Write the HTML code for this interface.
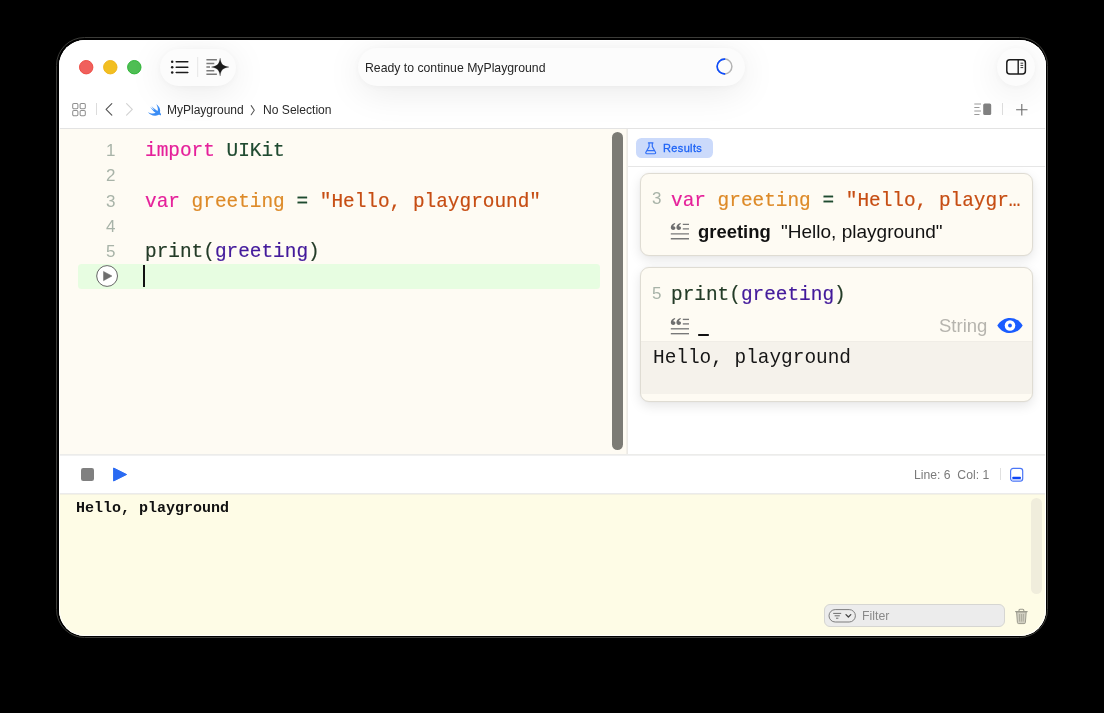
<!DOCTYPE html>
<html>
<head>
<meta charset="utf-8">
<title>MyPlayground</title>
<style>
html,body{margin:0;padding:0;background:#000;}
body{width:1104px;height:713px;position:relative;overflow:hidden;font-family:"Liberation Sans",sans-serif;}
.abs{position:absolute;}
.t{position:absolute;white-space:pre;line-height:1;will-change:transform;}
.mono{font-family:"Liberation Mono",monospace;}
#win{position:absolute;left:58.7px;top:39.5px;width:986.9px;height:596px;border-radius:26px;background:#fff;overflow:hidden;}
#ring{position:absolute;left:56px;top:36.9px;width:990px;height:599.1px;border-radius:28.5px;border:1px solid #3b3b38;}
/* everything inside #win positioned relative to page via negative offset wrapper */
#pg{position:absolute;left:-58.7px;top:-39.5px;width:1104px;height:713px;}
.pill{position:absolute;background:#fcfcfc;box-shadow:0 6px 36px rgba(0,0,0,.085),0 1px 6px rgba(0,0,0,.03);}
.code{font-family:"Liberation Mono",monospace;font-size:19.42px;-webkit-text-stroke:0.18px currentColor;}
.kw{color:#e5209a;}
.ty{color:#1f4a30;}
.id{color:#dd8a28;}
.st{color:#c64d13;}
.pl{color:#233b27;}
.us{color:#431a9b;}
.ln{color:#a8b3a8;font-size:17px;}
.card{position:absolute;background:#fefbf3;border:1px solid #dfdcd3;border-radius:9px;box-shadow:0 4px 12px rgba(0,0,0,.10),0 0 2px rgba(0,0,0,.05);box-sizing:border-box;overflow:hidden;}
</style>
</head>
<body>
<div id="ring"></div>
<div id="win"><div id="pg">

<!-- title bar -->
<div class="abs" style="left:59px;top:40px;width:987px;height:88px;background:#fff;"></div>
<div class="abs" style="left:59px;top:128px;width:987px;height:1px;background:#e3e3e3;"></div>

<!-- traffic lights -->
<svg class="abs" style="left:74px;top:55px;" width="74" height="25" viewBox="0 0 74 25">
  <circle cx="12.2" cy="12.2" r="6.7" fill="#f0605c" stroke="#ef4d44" stroke-width="1"/>
  <circle cx="36.3" cy="12.2" r="6.7" fill="#f2bf21" stroke="#f0b61c" stroke-width="1"/>
  <circle cx="60.3" cy="12.2" r="6.7" fill="#4fbe54" stroke="#2fb638" stroke-width="1"/>
</svg>

<!-- left pill -->
<div class="pill" style="left:160px;top:48.5px;width:76px;height:37px;border-radius:19px;"></div>
<svg class="abs" style="left:160px;top:48px;" width="76" height="38" viewBox="0 0 76 38">
  <g stroke="#1c1c1c" stroke-width="1.5" stroke-linecap="round">
    <line x1="16.2" y1="13.8" x2="27.8" y2="13.8"/><line x1="16.2" y1="19.2" x2="27.8" y2="19.2"/><line x1="16.2" y1="24.5" x2="27.8" y2="24.5"/>
  </g>
  <g fill="#1c1c1c"><circle cx="12.2" cy="13.8" r="1.25"/><circle cx="12.2" cy="19.2" r="1.25"/><circle cx="12.2" cy="24.5" r="1.25"/></g>
  <line x1="37.7" y1="9" x2="37.7" y2="29" stroke="#e6e6e6" stroke-width="1"/>
  <g stroke="#7a7a7a" stroke-width="1.5">
    <line x1="46.4" y1="11.8" x2="56.9" y2="11.8"/><line x1="46.4" y1="15.4" x2="54.3" y2="15.4"/><line x1="46.4" y1="19.1" x2="50" y2="19.1"/><line x1="46.4" y1="22.7" x2="54.3" y2="22.7"/><line x1="46.4" y1="26.2" x2="56.9" y2="26.2"/>
  </g>
  <path d="M60.1 10.1 C60.9 16.2 62.9 18.2 69 19.1 C62.9 20 60.9 22 60.1 28 C59.3 22 57.3 20 51.3 19.1 C57.3 18.2 59.3 16.2 60.1 10.1Z" fill="#1c1c1c" stroke="#1c1c1c" stroke-width="0.2" stroke-linejoin="round"/>
</svg>

<!-- center pill -->
<div class="pill" style="left:358px;top:48px;width:387px;height:38px;border-radius:19px;"></div>
<div class="t" id="ready" style="left:365.3px;top:62.3px;font-size:12.25px;color:#262626;">Ready to continue MyPlayground</div>
<svg class="abs" style="left:713.5px;top:56.4px;" width="21" height="21" viewBox="0 0 21 21">
  <circle cx="10.5" cy="10.5" r="7.4" fill="none" stroke="#b4b4b4" stroke-width="1.5"/>
  <path d="M11.2 3.13 A7.4 7.4 0 1 0 11.2 17.87" fill="none" stroke="#0d4dff" stroke-width="1.6"/>
</svg>

<!-- right circle -->
<div class="pill" style="left:997px;top:48px;width:38px;height:38px;border-radius:19px;"></div>
<svg class="abs" style="left:1004px;top:57px;" width="24" height="20" viewBox="0 0 24 20">
  <rect x="2.8" y="2.8" width="18.6" height="14.2" rx="3" fill="none" stroke="#1c1c1c" stroke-width="1.5"/>
  <line x1="14.2" y1="3" x2="14.2" y2="17" stroke="#1c1c1c" stroke-width="1.4"/>
  <g stroke="#1c1c1c" stroke-width="0.9"><line x1="16.5" y1="6.2" x2="19.2" y2="6.2"/><line x1="16.5" y1="8.4" x2="19.2" y2="8.4"/><line x1="16.5" y1="10.6" x2="19.2" y2="10.6"/></g>
</svg>

<!-- nav bar -->
<svg class="abs" style="left:71px;top:102px;" width="16" height="16" viewBox="0 0 16 16">
  <g fill="none" stroke="#8f8f8f" stroke-width="1.05"><rect x="1.7" y="1.5" width="5.2" height="5.2" rx="1.2"/><rect x="9.1" y="1.5" width="5.2" height="5.2" rx="1.2"/><rect x="1.7" y="8.5" width="5.2" height="5.2" rx="1.2"/><rect x="9.1" y="8.5" width="5.2" height="5.2" rx="1.2"/></g>
</svg>
<div class="abs" style="left:96px;top:103px;width:1px;height:12px;background:#dcdcdc;"></div>
<svg class="abs" style="left:103px;top:102px;" width="34" height="16" viewBox="0 0 34 16">
  <path d="M8.8 1.7 L3.1 7.4 L8.8 13.1" fill="none" stroke="#555" stroke-width="1.15" stroke-linecap="round" stroke-linejoin="round"/>
  <path d="M23.6 1.7 L29.3 7.4 L23.6 13.1" fill="none" stroke="#d2d2d2" stroke-width="1.15" stroke-linecap="round" stroke-linejoin="round"/>
</svg>
<svg class="abs" style="left:147px;top:102.6px;" width="16" height="15" viewBox="0 0 16 15">
  <path d="M9.3 1.2 C12.3 3.2 13.9 6.6 12.9 9.3 C13.9 10.6 14.3 11.9 14 12.6 C13 11.6 11.9 11.7 11.2 12.1 C9.2 13.2 6.2 13.1 3.6 11.6 C2.5 10.9 1.6 10 1 9 C3.6 10.7 6.6 11 8.6 9.8 C6.1 7.9 4.2 5.5 3.1 3.9 C4.7 5.3 6.7 6.8 7.6 7.3 C6.6 6.2 5 4.1 4.4 3 C6.2 4.8 8.7 6.9 10.6 8 C11.3 6 10.6 3.2 9.3 1.2Z" fill="#3b8df5"/>
</svg>
<div class="t" id="nav1" style="left:167.3px;top:103.5px;font-size:12px;color:#2a2a2a;">MyPlayground</div>
<svg class="abs" style="left:249px;top:103.5px;" width="8" height="13" viewBox="0 0 8 13"><path d="M2.2 1.6 L5.3 6.2 L2.2 10.8" fill="none" stroke="#555" stroke-width="1.05" stroke-linecap="round" stroke-linejoin="round"/></svg>
<div class="t" id="nav2" style="left:262.8px;top:104px;font-size:12.1px;color:#2a2a2a;">No Selection</div>

<svg class="abs" style="left:973px;top:102px;" width="20" height="15" viewBox="0 0 20 15">
  <g stroke="#9a9a9a" stroke-width="1"><line x1="1.3" y1="2" x2="8" y2="2"/><line x1="1.3" y1="5.5" x2="6.5" y2="5.5"/><line x1="1.3" y1="9" x2="8" y2="9"/><line x1="1.3" y1="12.5" x2="6.5" y2="12.5"/></g>
  <rect x="10.2" y="1.4" width="8" height="11.6" rx="1.6" fill="#808080"/>
</svg>
<div class="abs" style="left:1002px;top:103px;width:1px;height:12px;background:#dcdcdc;"></div>
<svg class="abs" style="left:1015px;top:103px;" width="14" height="14" viewBox="0 0 14 14"><path d="M6.8 1 V12.4 M1.1 6.7 H12.5" stroke="#6a6a6a" stroke-width="1.1" fill="none"/></svg>

<!-- editor -->
<div class="abs" style="left:59px;top:129px;width:567px;height:326px;background:#fefbf3;"></div>
<div class="abs" style="left:78px;top:263.5px;width:522px;height:25px;border-radius:3.5px;background:#e7fde1;"></div>
<div id="lns">
<div class="t ln" style="left:106px;top:142px;">1</div>
<div class="t ln" style="left:106px;top:167px;">2</div>
<div class="t ln" style="left:106px;top:193px;">3</div>
<div class="t ln" style="left:106px;top:218px;">4</div>
<div class="t ln" style="left:106px;top:243px;">5</div>
</div>
<div class="t code" id="c1" style="left:144.5px;top:142.2px;"><span class="kw">import</span> <span class="ty">UIKit</span></div>
<div class="t code" id="c3" style="left:144.5px;top:192.6px;"><span class="kw">var</span> <span class="id">greeting</span> <span class="ty">=</span> <span class="st">"Hello, playground"</span></div>
<div class="t code" id="c5" style="left:144.5px;top:243.2px;"><span class="pl">print(</span><span class="us">greeting</span><span class="pl">)</span></div>
<svg class="abs" style="left:95px;top:264px;" width="24" height="24" viewBox="0 0 24 24">
  <circle cx="12.1" cy="12" r="10.4" fill="#fff" stroke="#666" stroke-width="1"/>
  <path d="M8.5 7.4 L17 12 L8.5 16.7 Z" fill="#6e6e6e" stroke="#6e6e6e" stroke-width="0.5" stroke-linejoin="round"/>
</svg>
<div class="abs" style="left:143.2px;top:264.8px;width:1.6px;height:22.6px;background:#111;"></div>

<!-- editor scrollbar -->
<div class="abs" style="left:611.9px;top:132.2px;width:11.2px;height:318px;border-radius:6px;background:#7c7b75;"></div>
<div class="abs" style="left:626px;top:129px;width:1px;height:325px;background:#f3f0e9;z-index:2;"></div><div class="abs" style="left:627px;top:129px;width:1px;height:325px;background:#eceae6;z-index:2;"></div>

<!-- results panel -->
<div class="abs" style="left:627px;top:129px;width:419px;height:326px;background:#fff;"></div>
<div class="abs" style="left:636px;top:137.8px;width:77.3px;height:20.4px;border-radius:5.5px;background:#cbdafb;"></div>
<svg class="abs" style="left:643px;top:140px;" width="16" height="16" viewBox="0 0 16 16">
  <path d="M5.4 2.9 H10 M6.1 2.9 V6.6 L2.9 12.2 C2.5 13 2.9 13.7 3.8 13.7 H11.6 C12.5 13.7 12.9 13 12.5 12.2 L9.3 6.6 V2.9 M4.3 10.6 H11.1" fill="none" stroke="#2e6ef7" stroke-width="1.15" stroke-linecap="round" stroke-linejoin="round"/>
</svg>
<div class="t" id="restab" style="left:663.2px;top:142.6px;font-size:11px;letter-spacing:0.36px;-webkit-text-stroke:0.3px #1d63f5;color:#1d63f5;">Results</div>
<div class="abs" style="left:627px;top:166px;width:419px;height:1px;background:#e6e6e6;"></div>

<!-- card 1 -->
<div class="card" style="left:640px;top:173.2px;width:393px;height:82.4px;"></div>
<div class="t ln" id="k1n" style="left:652px;top:190px;">3</div>
<div class="t code" id="k1c" style="left:671px;top:191.8px;"><span class="kw">var</span> <span class="id">greeting</span> <span class="ty">=</span> <span class="st">"Hello, playgr…</span></div>
<svg class="abs qi" style="left:670px;top:222.4px;" width="20" height="19" viewBox="0 0 20 19">
  <g stroke="#787878" stroke-width="1.35"><line x1="12.8" y1="2.4" x2="19" y2="2.4"/><line x1="12.8" y1="6.9" x2="19" y2="6.9"/><line x1="0.8" y1="11.8" x2="19" y2="11.8"/><line x1="0.8" y1="16.7" x2="19" y2="16.7"/></g>
  <g fill="#6e6e6e"><path d="M4.9 1.1 L5.3 1.9 C3.9 2.7 3.3 3.5 3.2 4.3 C4.5 4.1 5.4 4.9 5.4 6.1 C5.4 7.3 4.4 8.1 3.2 8.1 C1.8 8.1 0.8 7.1 0.8 5.6 C0.8 3.5 2.3 1.9 4.9 1.1Z"/><path d="M10.5 1.1 L10.9 1.9 C9.5 2.7 8.9 3.5 8.8 4.3 C10.1 4.1 11 4.9 11 6.1 C11 7.3 10 8.1 8.8 8.1 C7.4 8.1 6.4 7.1 6.4 5.6 C6.4 3.5 7.9 1.9 10.5 1.1Z"/></g>
</svg>
<div class="t" id="k1b" style="left:698px;top:223.2px;font-size:18.45px;font-weight:bold;color:#111;">greeting</div>
<div class="t" id="k1v" style="left:781.3px;top:221.8px;font-size:19.05px;color:#111;">"Hello, playground"</div>

<!-- card 2 -->
<div class="card" style="left:640px;top:267.4px;width:393px;height:135px;">
  <div class="abs" style="left:0;top:73px;width:393px;height:52.5px;background:#f5f2eb;border-top:1px solid #f0ede6;box-sizing:border-box;"></div>
</div>
<div class="t ln" id="k2n" style="left:652px;top:285px;">5</div>
<div class="t code" id="k2c" style="left:671px;top:286.3px;"><span class="pl">print(</span><span class="us">greeting</span><span class="pl">)</span></div>
<svg class="abs qi" style="left:670px;top:317px;" width="20" height="19" viewBox="0 0 20 19">
  <g stroke="#787878" stroke-width="1.35"><line x1="12.8" y1="2.4" x2="19" y2="2.4"/><line x1="12.8" y1="6.9" x2="19" y2="6.9"/><line x1="0.8" y1="11.8" x2="19" y2="11.8"/><line x1="0.8" y1="16.7" x2="19" y2="16.7"/></g>
  <g fill="#6e6e6e"><path d="M4.9 1.1 L5.3 1.9 C3.9 2.7 3.3 3.5 3.2 4.3 C4.5 4.1 5.4 4.9 5.4 6.1 C5.4 7.3 4.4 8.1 3.2 8.1 C1.8 8.1 0.8 7.1 0.8 5.6 C0.8 3.5 2.3 1.9 4.9 1.1Z"/><path d="M10.5 1.1 L10.9 1.9 C9.5 2.7 8.9 3.5 8.8 4.3 C10.1 4.1 11 4.9 11 6.1 C11 7.3 10 8.1 8.8 8.1 C7.4 8.1 6.4 7.1 6.4 5.6 C6.4 3.5 7.9 1.9 10.5 1.1Z"/></g>
</svg>
<div class="abs" style="left:698px;top:333.6px;width:11.1px;height:2.2px;border-radius:0.8px;background:#111;"></div>
<div class="t" id="k2s" style="left:938.6px;top:316.8px;font-size:18.5px;color:#b6b4ae;">String</div>
<svg class="abs" style="left:996.2px;top:316.2px;" width="28" height="19" viewBox="0 0 28 19">
  <path d="M1.3 9.5 C4.4 4.4 9 1.9 14 1.9 C19 1.9 23.6 4.4 26.7 9.5 C23.6 14.6 19 17.1 14 17.1 C9 17.1 4.4 14.6 1.3 9.5Z" fill="#1a5cff"/>
  <circle cx="14" cy="9.5" r="5.3" fill="#fff"/><circle cx="14" cy="9.5" r="1.9" fill="#1a5cff"/>
</svg>
<div class="t mono" id="k2o" style="left:653px;top:349px;font-size:19.42px;color:#161616;">Hello, playground</div>

<!-- bottom toolbar -->
<div class="abs" style="left:59px;top:454px;width:987px;height:1px;background:#ececea;"></div><div class="abs" style="left:59px;top:455px;width:987px;height:1px;background:#f1f1f1;z-index:2;"></div>
<div class="abs" style="left:59px;top:455.5px;width:987px;height:38px;background:#fff;"></div>

<div class="abs" style="left:80.8px;top:468.1px;width:12.8px;height:12.8px;border-radius:2.2px;background:#808080;"></div>
<svg class="abs" style="left:112px;top:466px;" width="16" height="17" viewBox="0 0 16 17"><path d="M1.6 2 L14.6 8.5 L1.6 15 Z" fill="#2a6af2" stroke="#2a6af2" stroke-width="1" stroke-linejoin="round"/></svg>
<div class="t" id="linecol" style="left:914.4px;top:468.7px;font-size:12.2px;color:#7a7a7a;">Line: 6  Col: 1</div>
<div class="abs" style="left:1000px;top:468px;width:1px;height:12px;background:#e0e0e0;"></div>
<svg class="abs" style="left:1009px;top:467px;" width="16" height="16" viewBox="0 0 16 16">
  <rect x="1.6" y="1.4" width="12.1" height="12.8" rx="2.6" fill="#fff" stroke="#4a76f7" stroke-width="1.2"/>
  <path d="M2.6 12.3 H12.7 V12.6 C12.7 13.3 12.2 13.7 11.6 13.7 H3.7 C3.1 13.7 2.6 13.3 2.6 12.6 Z" fill="#a9bdfb"/>
  <rect x="3.2" y="9.8" width="8.8" height="2.1" rx="0.9" fill="#0d45f5"/>
</svg>

<!-- console -->
<div class="abs" style="left:59px;top:493px;width:987px;height:1px;background:#ebebeb;z-index:2;"></div><div class="abs" style="left:59px;top:494px;width:987px;height:143px;background:#fefce6;border-top:1px solid #f3f1e2;"></div>
<div class="t mono" id="cons" style="left:76px;top:500.6px;font-size:15px;font-weight:bold;color:#111;">Hello, playground</div>
<div class="abs" style="left:1030.6px;top:497.6px;width:11.4px;height:96.8px;border-radius:6px;background:#f0eddc;"></div>
<div class="abs" style="left:824px;top:604px;width:181.3px;height:23.4px;box-sizing:border-box;border:1px solid #d6d6d2;border-radius:6px;background:#ececec;"></div>
<svg class="abs" style="left:828px;top:608px;" width="30" height="16" viewBox="0 0 30 16">
  <rect x="1" y="1.6" width="26.4" height="12.4" rx="6.2" fill="none" stroke="#7d7d7d" stroke-width="1"/>
  <g stroke="#6d6d6d" stroke-width="1"><line x1="5.2" y1="5.4" x2="13.2" y2="5.4"/><line x1="6.6" y1="7.8" x2="11.8" y2="7.8"/><line x1="8" y1="10.2" x2="10.4" y2="10.2"/></g>
  <path d="M18 6.6 L20.4 9 L22.8 6.6" fill="none" stroke="#444" stroke-width="1.3" stroke-linecap="round" stroke-linejoin="round"/>
</svg>
<div class="t" id="filt" style="left:861.5px;top:609.9px;font-size:12.3px;color:#8a8a8a;">Filter</div>
<svg class="abs" style="left:1014px;top:607px;" width="15" height="18" viewBox="0 0 15 18">
  <path d="M1.6 4.6 H13.2 M5 4.4 V3.2 C5 2.6 5.4 2.2 6 2.2 H8.8 C9.4 2.2 9.8 2.6 9.8 3.2 V4.4" fill="none" stroke="#9c9b8e" stroke-width="1.1" stroke-linecap="round"/>
  <path d="M2.6 5 H12.2 L11.4 15.4 C11.4 16.2 10.9 16.6 10.2 16.6 H4.6 C3.9 16.6 3.4 16.2 3.4 15.4 Z" fill="#d2d0c2" stroke="#9c9b8e" stroke-width="1"/>
  <g stroke="#a6a596" stroke-width="0.9"><line x1="5.4" y1="7" x2="5.6" y2="14.6"/><line x1="7.4" y1="7" x2="7.4" y2="14.6"/><line x1="9.4" y1="7" x2="9.2" y2="14.6"/></g>
</svg>

</div><div id="hl" style="position:absolute;left:0;top:0;right:0;bottom:0;border-radius:26px;box-shadow:inset 0 0 0 1px rgba(255,255,255,.85);z-index:5;"></div></div>
</body>
</html>
